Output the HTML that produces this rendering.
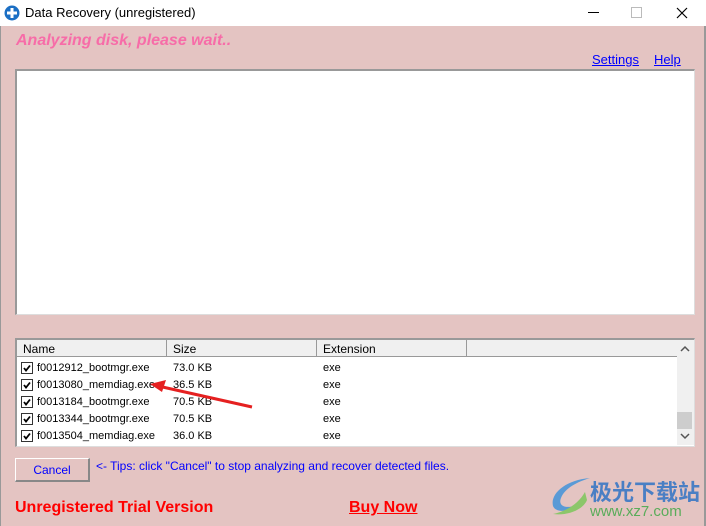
<!DOCTYPE html><html><head><style>
body{margin:0;width:706px;height:526px;overflow:hidden;background:#e4c4c2;font-family:"Liberation Sans",Arial,sans-serif;position:relative}
.a{position:absolute}
.t{font-size:12px;color:#000}
</style></head><body>
<div class="a" style="left:0;top:0;width:706px;height:26px;background:#fff"></div>
<svg class="a" style="left:4px;top:5px" width="16" height="16"><circle cx="8" cy="8" r="7.5" fill="#1b6fc4"/><rect x="6.5" y="3" width="3" height="10" fill="#fff"/><rect x="3" y="6.5" width="10" height="3" fill="#fff"/></svg>
<div class="a" style="left:25px;top:5px;font-size:13px">Data Recovery (unregistered)</div>
<div class="a" style="left:588px;top:12px;width:11px;height:1px;background:#000"></div>
<div class="a" style="left:631px;top:7px;width:9px;height:9px;border:1px solid #bbb"></div>
<svg class="a" style="left:676px;top:7px" width="12" height="12"><path d="M1 1L11 11M11 1L1 11" stroke="#000" stroke-width="1.2"/></svg>
<div class="a" style="left:0;top:26px;width:1px;height:500px;background:#999"></div>
<div class="a" style="left:704px;top:26px;width:2px;height:500px;background:#999"></div>
<div class="a" style="left:16px;top:32px;font-size:16px;font-weight:bold;font-style:italic;color:#f76ca8">Analyzing disk, please wait..</div>
<div class="a" style="left:592px;top:52px;font-size:13px;color:#00f;text-decoration:underline">Settings</div>
<div class="a" style="left:654px;top:52px;font-size:13px;color:#00f;text-decoration:underline">Help</div>
<div class="a" style="left:15px;top:69px;width:677px;height:243px;background:#fff;border-top:2px solid #999;border-left:2px solid #999;border-right:1px solid #ddd;border-bottom:1px solid #ddd"></div>
<div class="a" style="left:15px;top:338px;width:677px;height:106px;background:#fff;border-top:2px solid #999;border-left:2px solid #999;border-right:1px solid #ddd;border-bottom:1px solid #ddd"></div>
<div class="a" style="left:17px;top:340px;width:660px;height:16px;background:#f0f0f0;border-bottom:1px solid #999"></div>
<div class="a" style="left:166px;top:340px;width:1px;height:16px;background:#999"></div>
<div class="a" style="left:316px;top:340px;width:1px;height:16px;background:#999"></div>
<div class="a" style="left:466px;top:340px;width:1px;height:16px;background:#999"></div>
<div class="a t" style="left:23px;top:342px">Name</div>
<div class="a t" style="left:173px;top:342px">Size</div>
<div class="a t" style="left:323px;top:342px">Extension</div>
<div class="a" style="left:677px;top:340px;width:17px;height:105px;background:#f0f0f0"></div>
<div class="a" style="left:677px;top:412px;width:15px;height:17px;background:#cdcdcd"></div>
<svg class="a" style="left:680px;top:345px" width="10" height="8"><path d="M1 6L5 2L9 6" stroke="#555" stroke-width="1.5" fill="none"/></svg>
<svg class="a" style="left:680px;top:432px" width="10" height="8"><path d="M1 2L5 6L9 2" stroke="#555" stroke-width="1.5" fill="none"/></svg>
<div id="rows"></div>
<div class="a" style="left:15px;top:458px;width:72px;height:21px;background:#e4c4c2;border-top:1px solid #fff;border-left:1px solid #fff;border-right:2px solid #888;border-bottom:2px solid #888;color:#00f;font-size:12px;text-align:center;line-height:22px">Cancel</div>
<div class="a" style="left:96px;top:459px;font-size:12px;color:#00f">&lt;- Tips: click "Cancel" to stop analyzing and recover detected files.</div>
<div class="a" style="left:15px;top:499px;font-size:16px;font-weight:bold;color:#f00">Unregistered Trial Version</div>
<div class="a" style="left:349px;top:499px;font-size:16px;font-weight:bold;color:#f00;text-decoration:underline">Buy Now</div>
<div class="a" style="left:590px;top:475px;font-size:22px;font-weight:bold;color:#4a7fc4;font-family:'Noto Sans CJK SC',sans-serif">极光下载站</div>
<div class="a" style="left:590px;top:503px;font-size:15px;color:#5aac5a">www.xz7.com</div>
<svg class="a" style="left:545px;top:474px" width="50" height="45"><path d="M45 4C20 6 5 20 8 32c3 8 20 6 30-4C25 36 12 34 16 24 20 14 32 8 45 4z" fill="#5a9ad6"/><path d="M40 18c-8 14-22 20-32 22 14 2 30-4 34-14z" fill="#8cc66a"/></svg>
<svg class="a" style="left:148px;top:378px" width="110" height="34"><path d="M104 29L10 8" stroke="#e52020" stroke-width="3"/><path d="M2 6L18 2L14 14z" fill="#e52020"/></svg>
<script>
var r=[["f0012912_bootmgr.exe","73.0 KB"],["f0013080_memdiag.exe","36.5 KB"],["f0013184_bootmgr.exe","70.5 KB"],["f0013344_bootmgr.exe","70.5 KB"],["f0013504_memdiag.exe","36.0 KB"]],h="";
r.forEach(function(x,i){var y=362+i*17;
h+='<div class="a" style="left:21px;top:'+y+'px;width:10px;height:10px;border:1px solid #333;background:#fff"><svg width="10" height="10" style="display:block"><path d="M2 5L4 7.5L8 2.5" stroke="#000" stroke-width="1.8" fill="none"/></svg></div>';
h+='<div class="a t" style="left:37px;top:'+(y)+'px;font-size:11px">'+x[0]+'</div><div class="a t" style="left:173px;top:'+(y)+'px;font-size:11px">'+x[1]+'</div><div class="a t" style="left:323px;top:'+(y)+'px;font-size:11px">exe</div>';});
document.getElementById('rows').innerHTML=h;
</script>
</body></html>
